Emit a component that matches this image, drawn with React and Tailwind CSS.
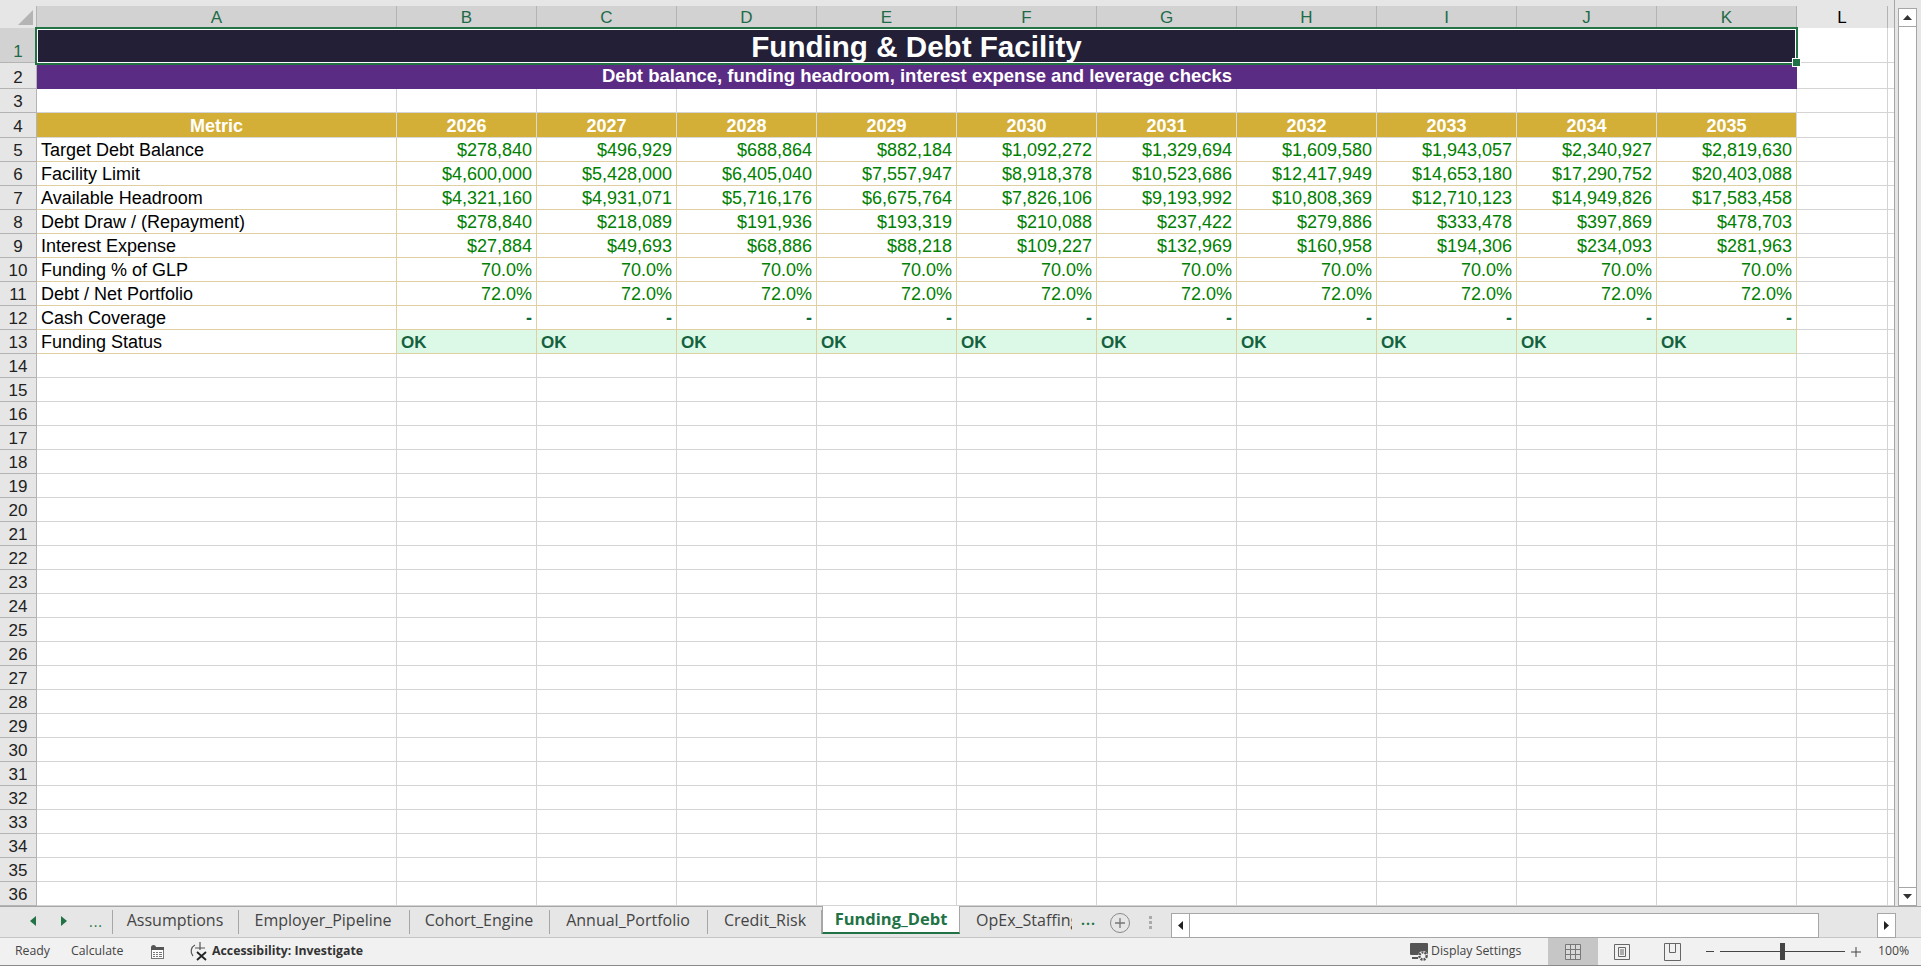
const COLS = ["B", "C", "D", "E", "F", "G", "H", "I", "J", "K"];
const YEARS = [2026, 2027, 2028, 2029, 2030, 2031, 2032, 2033, 2034, 2035];

const ROWS = [
  ["Target Debt Balance", ["$278,840", "$496,929", "$688,864", "$882,184", "$1,092,272", "$1,329,694", "$1,609,580", "$1,943,057", "$2,340,927", "$2,819,630"]],
  ["Facility Limit", ["$4,600,000", "$5,428,000", "$6,405,040", "$7,557,947", "$8,918,378", "$10,523,686", "$12,417,949", "$14,653,180", "$17,290,752", "$20,403,088"]],
  ["Available Headroom", ["$4,321,160", "$4,931,071", "$5,716,176", "$6,675,764", "$7,826,106", "$9,193,992", "$10,808,369", "$12,710,123", "$14,949,826", "$17,583,458"]],
  ["Debt Draw / (Repayment)", ["$278,840", "$218,089", "$191,936", "$193,319", "$210,088", "$237,422", "$279,886", "$333,478", "$397,869", "$478,703"]],
  ["Interest Expense", ["$27,884", "$49,693", "$68,886", "$88,218", "$109,227", "$132,969", "$160,958", "$194,306", "$234,093", "$281,963"]],
  ["Funding % of GLP", Array(10).fill("70.0%")],
  ["Debt / Net Portfolio", Array(10).fill("72.0%")],
  ["Cash Coverage", Array(10).fill("-")],
];

const EMPTY_ROWS = Array.from({ length: 23 }, (_, i) => i + 14);

const TABS = [
  { name: "Assumptions", w: "w-[124px] pr-[4px]" },
  { name: "Employer_Pipeline", w: "w-[171px] pr-[3px]" },
  { name: "Cohort_Engine", w: "w-[140px] pr-[2px]" },
  { name: "Annual_Portfolio", w: "w-[158px] pr-[2px]" },
  { name: "Credit_Risk", w: "w-[114px]" },
];

function RowNum({ n, active, h = "h-[24px]" }) {
  return (
    <div className={`${h} w-[37px] shrink-0 flex items-end justify-center border-b border-r border-[#b4b4b4] text-[17px] leading-[21px] ${active ? "bg-[#d2d2d2] text-[#1f6b48]" : "bg-[#e6e6e6] text-[#222]"}`}>
      {n}
    </div>
  );
}

// trailing L column + sliver up to the scrollbar
function Trailing() {
  return (
    <div className="flex-1 flex border-b border-[#d4d4d4]">
      <div className="w-[91px] border-r border-[#d4d4d4]" />
      <div className="flex-1" />
    </div>
  );
}

function GridRow({ n, active, h, children }) {
  return (
    <div className="flex">
      <RowNum n={n} active={active} h={h} />
      {children}
      <Trailing />
    </div>
  );
}

function EmptyCells() {
  return (
    <>
      <div className="w-[360px] shrink-0 border-b border-r border-[#d4d4d4]" />
      {COLS.map((c) => (
        <div key={c} className="w-[140px] shrink-0 border-b border-r border-[#d4d4d4]" />
      ))}
    </>
  );
}

function Sheet() {
  return (
    <div className="flex-1 min-w-0 border-r border-[#a6a6a6]">
      {/* column headers */}
      <div className="flex h-[28px] pt-[6px] bg-[#e6e6e6] text-[17px] leading-[24px]">
        <div className="w-[37px] shrink-0 relative border-r border-[#b4b4b4]">
          <svg className="absolute right-[3px] bottom-[3px]" width="15" height="15" viewBox="0 0 15 15">
            <path d="M15 0V15H0Z" fill="#b4b4b4" />
          </svg>
        </div>
        <div className="w-[360px] shrink-0 bg-[#d2d2d2] text-[#1f6b48] text-center border-r border-[#b4b4b4]">A</div>
        {COLS.map((c) => (
          <div key={c} className="w-[140px] shrink-0 bg-[#d2d2d2] text-[#1f6b48] text-center border-r border-[#b4b4b4]">{c}</div>
        ))}
        <div className="w-[91px] shrink-0 text-center text-black border-r border-[#b4b4b4]">L</div>
      </div>

      {/* title, selection border sits over the neighbouring cells */}
      <GridRow n={1} active h="h-[35px]">
        <div className="w-[1763px] h-[38px] -ml-[2px] -mr-px -mt-px -mb-[2px] shrink-0 relative bg-[#221f37] border-2 border-[#217346] pt-[4px] text-white text-center font-bold text-[29.6px] leading-[28px] outline outline-white -outline-offset-3">
          Funding &amp; Debt Facility
          <div className="absolute -right-[4px] -bottom-[3px] w-[7px] h-[7px] bg-[#217346] outline outline-white" />
        </div>
      </GridRow>
      <GridRow n={2} h="h-[26px]">
        <div className="w-[1760px] shrink-0 bg-[#5b2c83] text-white text-center font-bold text-[18.5px] leading-[26px]">
          Debt balance, funding headroom, interest expense and leverage checks
        </div>
      </GridRow>
      <GridRow n={3}>
        <EmptyCells />
      </GridRow>

      {/* table head */}
      <GridRow n={4} h="h-[25px]">
        <div className="w-[360px] shrink-0 pt-[2px] bg-[#d4af37] text-white font-bold text-center text-[18px] leading-[22px] border-r border-b border-[#d9d9d9]">Metric</div>
        {YEARS.map((y) => (
          <div key={y} className="w-[140px] shrink-0 pt-[2px] bg-[#d4af37] text-white font-bold text-center text-[18px] leading-[22px] border-r border-b border-[#d9d9d9]">{y}</div>
        ))}
      </GridRow>

      {ROWS.map(([label, vals], i) => (
        <GridRow key={label} n={i + 5}>
          <div className="w-[360px] shrink-0 px-1 pt-[2px] text-black text-[18px] leading-[21px] border-r border-b border-[#e0cfa0]">{label}</div>
          {vals.map((v, j) => (
            <div key={j} className={`w-[140px] shrink-0 px-1 pt-[2px] text-right text-[18px] leading-[21px] border-r border-b border-[#e0cfa0] ${v === "-" ? "text-[#0b6b3a] font-bold" : "text-[#008000]"}`}>{v}</div>
          ))}
        </GridRow>
      ))}

      <GridRow n={13}>
        <div className="w-[360px] shrink-0 px-1 pt-[2px] text-black text-[18px] leading-[21px] border-r border-b border-[#e0cfa0]">Funding Status</div>
        {COLS.map((c) => (
          <div key={c} className="w-[140px] shrink-0 px-1 pt-[2px] bg-[#dcf8e6] text-[#14613f] font-bold text-[17px] leading-[21px] border-r border-b border-[#e0cfa0]">OK</div>
        ))}
      </GridRow>

      {EMPTY_ROWS.map((n) => (
        <GridRow key={n} n={n}>
          <EmptyCells />
        </GridRow>
      ))}
    </div>
  );
}

function VScroll() {
  return (
    <div className="w-[26px] shrink-0 bg-[#e6e6e6] pl-[3px] pr-[4px] pt-[8px] flex flex-col">
      <div className="h-[19px] bg-white border border-[#a6a6a6] flex items-center justify-center">
        <svg width="9" height="5" viewBox="0 0 9 5"><path d="M4.5 0L9 5H0Z" fill="#333" /></svg>
      </div>
      <div className="flex-1 bg-white border-x border-[#a6a6a6]" />
      <div className="h-[19px] bg-white border border-[#a6a6a6] flex items-center justify-center">
        <svg width="9" height="5" viewBox="0 0 9 5"><path d="M0 0H9L4.5 5Z" fill="#333" /></svg>
      </div>
    </div>
  );
}

function TabBar() {
  return (
    <div className="h-[32px] flex bg-[#e6e6e6] border-t border-[#a6a6a6] border-b border-b-[#c6c6c6] font-['Open_Sans',sans-serif] text-[16px] text-[#444]">
      <div className="w-[115px] shrink-0 flex items-center relative pb-[2px]">
        <svg className="ml-[30px]" width="6" height="10" viewBox="0 0 6 10"><path d="M6 0V10L0 5Z" fill="#217346" /></svg>
        <svg className="ml-[25px]" width="6" height="10" viewBox="0 0 6 10"><path d="M0 0V10L6 5Z" fill="#217346" /></svg>
        <span className="ml-[22px] text-[#217346] text-[14px] tracking-[1px]">...</span>
        <div className="absolute right-[2px] top-[3px] bottom-[3px] border-r border-[#a6a6a6]" />
      </div>
      {TABS.map((t) => (
        <div key={t.name} className={`${t.w} shrink-0 relative flex items-center justify-center whitespace-nowrap pb-[5px]`}>
          {t.name}
          <div className="absolute right-0 top-[3px] bottom-[3px] border-r border-[#a6a6a6]" />
        </div>
      ))}
      <div className="w-[138px] h-[28px] -mt-px pt-[1px] shrink-0 bg-white border-x border-[#a6a6a6] border-b-2 border-b-[#217346] flex items-center justify-center font-bold text-[16.5px] text-[#217346]">
        Funding_Debt
      </div>
      <div className="w-[112px] shrink-0 pl-[16px] pb-[5px] flex items-center overflow-hidden whitespace-nowrap">OpEx_Staffing</div>
      <span className="w-[38px] shrink-0 pl-[9px] text-[14px] tracking-[1px] text-[#217346] font-bold leading-[26px]">...</span>
      <div className="w-[20px] h-[20px] mt-[6px] shrink-0 rounded-full border border-[#8a8a8a] flex items-center justify-center">
        <svg width="12" height="12" viewBox="0 0 12 12"><path d="M6 1V11M1 6H11" stroke="#777" strokeWidth="1.3" /></svg>
      </div>
      <div className="w-[41px] shrink-0 flex flex-col items-center justify-center gap-[2px]">
        <i className="w-[3px] h-[3px] bg-[#aaa]" />
        <i className="w-[3px] h-[3px] bg-[#aaa]" />
        <i className="w-[3px] h-[3px] bg-[#aaa]" />
      </div>
      <div className="flex-1 flex pt-[6px] h-[25px] box-content">
        <div className="w-[19px] bg-white border border-[#a6a6a6] flex items-center justify-center">
          <svg width="5" height="9" viewBox="0 0 5 9"><path d="M5 0V9L0 4.5Z" fill="#222" /></svg>
        </div>
        <div className="w-[629px] bg-white border-y border-r border-[#a6a6a6]" />
        <div className="w-[58px]" />
        <div className="w-[19px] bg-white border border-[#a6a6a6] flex items-center justify-center">
          <svg width="5" height="9" viewBox="0 0 5 9"><path d="M0 0V9L5 4.5Z" fill="#222" /></svg>
        </div>
      </div>
    </div>
  );
}

function StatusBar() {
  return (
    <div className="h-[28px] flex items-center bg-[#f1f1f1] border-b border-[#8a8a8a] font-['Open_Sans',sans-serif] text-[12.3px] text-[#444]">
      <span className="ml-[15px] w-[56px]">Ready</span>
      <span className="w-[79px]">Calculate</span>
      <svg width="14" height="14" viewBox="0 0 14 14" fill="none">
        <rect x="1.5" y="2.5" width="12" height="11" fill="#fff" stroke="#777" />
        <rect x="1" y="2" width="13" height="3" fill="#555" />
        <circle cx="3.5" cy="2.5" r="2.5" fill="#555" />
        <path d="M3 7.5H5M6 7.5H8M9 7.5H12M3 9.5H5M6 9.5H8M9 9.5H12M3 11.5H5M6 11.5H8M9 11.5H12" stroke="#777" />
      </svg>
      <svg className="ml-[25px]" width="20" height="20" viewBox="0 0 20 20" fill="none" stroke="#555" strokeWidth="1.2">
        <path d="M6 3A7 7 0 0 0 4 14" />
        <path d="M11 0V8M6 6H16" />
        <path d="M8 10L17 18M17 10L8 18" stroke="#222" strokeWidth="1.8" />
      </svg>
      <span className="ml-[3px] font-bold text-[#333]">Accessibility: Investigate</span>

      <svg className="ml-auto" width="19" height="20" viewBox="0 0 19 20">
        <rect x="0" y="1" width="18" height="12" rx="1" fill="#555" />
        <path d="M2 15H8V17H2Z" fill="#555" />
        <circle cx="13" cy="14" r="5" fill="#f1f1f1" />
        <circle cx="13" cy="14" r="3.6" fill="none" stroke="#555" strokeWidth="2.4" strokeDasharray="2 1" />
      </svg>
      <span className="ml-[2px] w-[117px]">Display Settings</span>
      <div className="w-[50px] h-full bg-[#c6c6c6] flex items-center justify-center">
        <svg width="16" height="16" viewBox="0 0 16 16" fill="#d8d8d8" stroke="#777">
          <path d="M.5.5H15.5V15.5H.5ZM.5 5.5H15.5M.5 10.5H15.5M5.5.5V15.5M10.5.5V15.5" />
        </svg>
      </div>
      <div className="w-[48px] flex justify-center">
        <svg width="16" height="16" viewBox="0 0 16 16" fill="none" stroke="#666">
          <path d="M.5.5H15.5V15.5H.5ZM4.5 3.5H11.5V12.5H4.5ZM6 6H10M6 8H10M6 10H10" />
        </svg>
      </div>
      <div className="w-[52px] flex justify-center">
        <svg width="17" height="18" viewBox="0 0 17 18" fill="none" stroke="#666">
          <path d="M.5.5H16.5V17.5H.5ZM5.5.5V9.5H11.5V.5" />
        </svg>
      </div>
      <div className="w-[8px] ml-[8px] border-t border-[#444]" />
      <div className="ml-[6px] w-[125px] relative border-t border-[#444]">
        <div className="absolute left-[60px] -top-[9px] w-[5px] h-[17px] bg-[#444]" />
      </div>
      <svg className="ml-[6px]" width="10" height="10" viewBox="0 0 10 10"><path d="M5 0V10M0 5H10" stroke="#444" /></svg>
      <span className="ml-[17px] w-[43px]">100%</span>
    </div>
  );
}

export default function App() {
  return (
    <div className="w-[1921px] h-[966px] overflow-hidden bg-white flex flex-col font-['Liberation_Sans',Arial,sans-serif]">
      <div className="h-[906px] flex overflow-hidden">
        <Sheet />
        <VScroll />
      </div>
      <TabBar />
      <StatusBar />
    </div>
  );
}
